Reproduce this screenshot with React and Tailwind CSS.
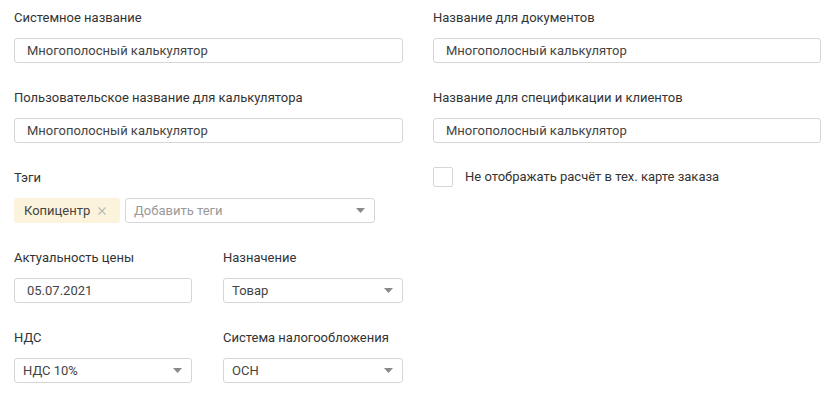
import React from "react";

// Small caret used by the select-like fields
function Caret() {
  return (
    <svg width="9" height="5" viewBox="0 0 9 5" className="shrink-0">
      <path d="M0 0 L9 0 L4.5 5 Z" fill="#8a8a8a" />
    </svg>
  );
}

function Label({ children }) {
  return <div className="h-5 leading-5 text-[13px] text-[#333]">{children}</div>;
}

function TextInput({ value, className = "" }) {
  return (
    <div
      className={`h-[25px] border border-[#d6d6d6] rounded-[3px] px-3 flex items-center text-[13px] text-[#444] bg-white ${className}`}
    >
      {value}
    </div>
  );
}

function Select({ value, placeholder, className = "" }) {
  return (
    <div
      className={`h-[25px] border border-[#d6d6d6] rounded-[3px] pl-2 pr-[9px] flex items-center justify-between text-[13px] bg-white ${className}`}
    >
      {value ? (
        <span className="text-[#444]">{value}</span>
      ) : (
        <span className="text-[#999]">{placeholder}</span>
      )}
      <Caret />
    </div>
  );
}

function Field({ label, children, className = "" }) {
  return (
    <div className={`flex flex-col ${className}`}>
      <Label>{label}</Label>
      <div className="mt-[10px]">{children}</div>
    </div>
  );
}

export default function App() {
  return (
    <div
      className="w-[838px] h-[398px] bg-white pl-[14px] pt-2 flex gap-[30px]"
      style={{ fontFamily: "Roboto, 'Liberation Sans', sans-serif" }}
    >
      {/* left column */}
      <div className="w-[389px] flex flex-col gap-[25px]">
        <Field label="Системное название">
          <TextInput value="Многополосный калькулятор" />
        </Field>
        <Field label="Пользовательское название для калькулятора">
          <TextInput value="Многополосный калькулятор" />
        </Field>
        <Field label="Тэги">
          <div className="flex gap-[5px] w-[361px]">
            <div className="h-[25px] w-[106px] rounded-[3px] bg-[#fcf3dc] pl-[10px] flex items-center text-[13px] text-[#444]">
              Копицентр
              <svg width="8" height="8" viewBox="0 0 8 8" className="ml-[8px]">
                <path d="M0.5 0.5 L7.5 7.5 M7.5 0.5 L0.5 7.5" stroke="#b8b8b8" strokeWidth="1.1" />
              </svg>
            </div>
            <Select placeholder="Добавить теги" className="flex-1" />
          </div>
        </Field>
        <div className="flex gap-[31px]">
          <Field label="Актуальность цены" className="w-[178px]">
            <TextInput value="05.07.2021" />
          </Field>
          <Field label="Назначение" className="w-[180px]">
            <Select value="Товар" />
          </Field>
        </div>
        <div className="flex gap-[31px]">
          <Field label="НДС" className="w-[178px]">
            <Select value="НДС 10%" />
          </Field>
          <Field label="Система налогообложения" className="w-[180px]">
            <Select value="ОСН" />
          </Field>
        </div>
      </div>

      {/* right column */}
      <div className="w-[388px] flex flex-col gap-[25px]">
        <Field label="Название для документов">
          <TextInput value="Многополосный калькулятор" />
        </Field>
        <Field label="Название для спецификации и клиентов">
          <TextInput value="Многополосный калькулятор" />
        </Field>
        <div className="flex items-center gap-3 -mt-[1px]">
          <div className="w-5 h-5 border border-[#d6d6d6] rounded-[2px] bg-white" />
          <span className="text-[13px] text-[#333]">Не отображать расчёт в тех. карте заказа</span>
        </div>
      </div>
    </div>
  );
}
